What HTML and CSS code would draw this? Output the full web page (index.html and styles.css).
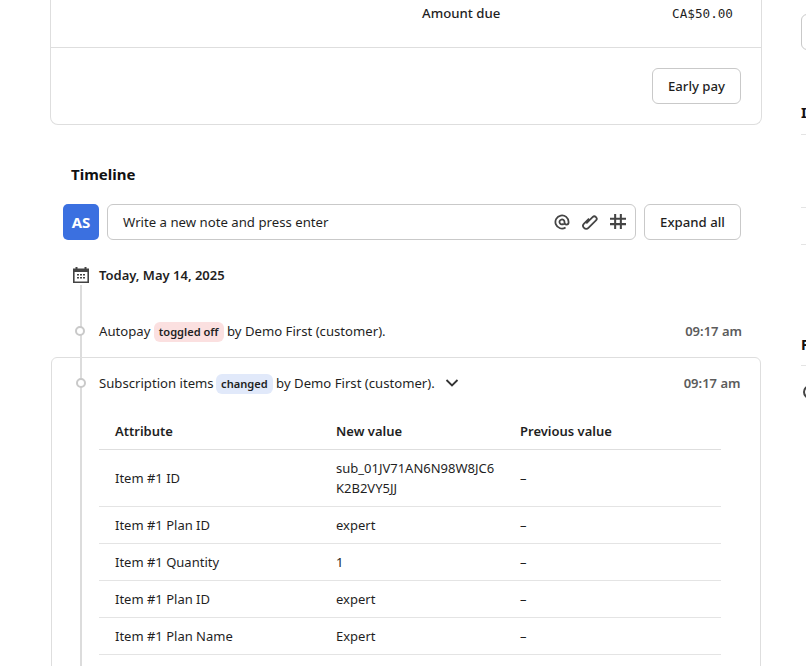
FILE: index.html
```html
<!DOCTYPE html>
<html lang="en">

<head>
    <meta charset="UTF-8">
    <title>Subscription</title>
    <link rel="stylesheet" href="styles.css">
</head>

<body>
    <div class="page">
        <main class="main">
            <section class="card">
                <div class="due-row">
                    <span class="due-label">Amount due</span>
                    <span class="due-value">CA$50.00</span>
                </div>
                <div class="card-foot">
                    <button class="btn btn-pay">Early pay</button>
                </div>
            </section>

            <section class="timeline">
                <h2 class="timeline-title">Timeline</h2>
                <div class="note-row">
                    <div class="avatar">AS</div>
                    <div class="note-input">
                        <span class="note-text">Write a new note and press enter</span>
                        <svg class="note-icon" viewBox="0 0 18 18"><path d="M13 15.2A7.4 7.4 0 1 1 16.4 9v.7a2.3 2.3 0 0 1-4.6 0V9a2.8 2.8 0 1 0-.9 2" /></svg>
                        <svg class="note-icon" viewBox="0 0 18 18"><path d="M5.5 7v8a3.5 3.5 0 0 0 7 0V3a2.7 2.7 0 0 0-5.4 0v10" transform="rotate(45 9 9)" /></svg>
                        <svg class="note-icon note-hash" viewBox="0 0 18 18"><path d="M5.8 0v17M12.2 0v17M0 5.4h18M0 11.4h18" /></svg>
                    </div>
                    <button class="btn btn-expand">Expand all</button>
                </div>

                <div class="events">
                    <div class="rail"></div>
                    <div class="day">
                        <svg class="day-icon" viewBox="0 0 16 16"><path fill="#444" fill-rule="evenodd" d="M0 1.5h2.5V0h2v1.5h7V0h2v1.5H16V16H0zM1.6 5v9.4h12.8V5z" /><path fill="#444" d="M4 7h2v1.6H4zM7 7h2v1.6H7zM10 7h2v1.6h-2zM4 10h2v1.6H4zM7 10h2v1.6H7zM10 10h2v1.6h-2z" /></svg>
                        <span>Today, May 14, 2025</span>
                    </div>

                    <div class="event">
                        <span class="dot"></span>
                        <span class="event-text">Autopay <span class="tag tag-red">toggled off</span> by Demo First (customer).</span>
                        <span class="event-time">09:17 am</span>
                    </div>

                    <div class="detail">
                        <div class="event event-open">
                            <span class="dot"></span>
                            <span class="event-text">Subscription items <span class="tag tag-blue">changed</span> by Demo First (customer).</span>
                            <svg class="chevron" viewBox="0 0 14 8"><path d="M1.5 1 7 6.5 12.5 1" /></svg>
                            <span class="event-time">09:17 am</span>
                        </div>
                        <table class="changes">
                            <thead>
                                <tr><th class="col-a">Attribute</th><th class="col-b">New value</th><th>Previous value</th></tr>
                            </thead>
                            <tbody>
                                <tr class="row-tall"><td>Item #1 ID</td><td class="wrap">sub_01JV71AN6N98W8JC6<br>K2B2VY5JJ</td><td>–</td></tr>
                                <tr><td>Item #1 Plan ID</td><td>expert</td><td>–</td></tr>
                                <tr><td>Item #1 Quantity</td><td>1</td><td>–</td></tr>
                                <tr><td>Item #1 Plan ID</td><td>expert</td><td>–</td></tr>
                                <tr><td>Item #1 Plan Name</td><td>Expert</td><td>–</td></tr>
                            </tbody>
                        </table>
                    </div>
                </div>
            </section>
        </main>

        <aside class="side">
            <div class="side-btn"></div>
            <h3 class="side-title">Invoices</h3>
            <div class="side-row side-row-a"></div>
            <div class="side-row side-row-b"></div>
            <h3 class="side-title side-title-2">Payment</h3>
            <div class="side-method"><span class="side-circle"></span></div>
        </aside>
    </div>
</body>

</html>
```

FILE: styles.css
```css
html, body {
    margin: 0;
    height: 100%;
    overflow: hidden;
    background: #fff;
}

body {
    font-family: "Noto Sans", "Open Sans", sans-serif;
    font-size: 13px;
    color: #1f1f1f;
}

.page {
    display: flex;
    gap: 39px;
    width: 1100px;
    padding-left: 50px;
}

.main {
    width: 712px;
    flex: none;
}

/* top card, its top edge is scrolled away */
.card {
    border: 1px solid #dedede;
    border-top: 0;
    border-radius: 0 0 8px 8px;
}

.due-row {
    display: flex;
    justify-content: space-between;
    height: 48px;
    padding: 4px 28px 0 371px;
    box-sizing: border-box;
    border-bottom: 1px solid #dedede;
}

.due-label {
    font-size: 13.2px;
    font-weight: 500;
    line-height: 19px;
}

.due-value {
    font-family: "DejaVu Sans Mono", "Liberation Mono", monospace;
    font-size: 12.67px;
    line-height: 19px;
}

.card-foot {
    display: flex;
    justify-content: flex-end;
    height: 76px;
    padding: 20px 20px 0 0;
    box-sizing: border-box;
}

.btn {
    height: 36px;
    padding: 0;
    border: 1px solid #c9c9c9;
    border-radius: 6px;
    background: #fff;
    font-family: inherit;
    font-size: 13.2px;
    font-weight: 500;
    color: #1f1f1f;
}

.btn-pay {
    width: 89px;
}

.timeline {
    padding-top: 38px;
}

.timeline-title {
    margin: 0 0 19px 21px;
    font-size: 15px;
    line-height: 22px;
    font-weight: 700;
    color: #111;
}

.note-row {
    display: flex;
    gap: 8px;
    padding: 0 21px 0 13px;
}

.avatar {
    flex: none;
    width: 36px;
    height: 36px;
    border-radius: 5px;
    background: #3b70e0;
    color: #fff;
    font-size: 15px;
    font-weight: 700;
    line-height: 36px;
    text-align: center;
}

.note-input {
    flex: 1;
    display: flex;
    align-items: center;
    gap: 12px;
    height: 36px;
    padding: 0 9px 0 15px;
    box-sizing: border-box;
    border: 1px solid #c9c9c9;
    border-radius: 6px;
}

.note-text {
    flex: 1;
    font-size: 13.2px;
}

.note-icon {
    width: 16px;
    height: 16px;
    fill: none;
    stroke: #444;
    stroke-width: 2;
}

.note-hash {
    stroke-width: 2.3;
}

.btn-expand {
    flex: none;
    width: 97px;
}

.events {
    position: relative;
    padding-top: 27px;
}

.rail {
    position: absolute;
    left: 30px;
    top: 45px;
    width: 2px;
    height: 400px;
    background: #dcdcdc;
}

.day {
    display: flex;
    align-items: center;
    gap: 10px;
    height: 16px;
    padding-left: 23px;
    font-weight: 600;
}

.day-icon {
    width: 16px;
    height: 16px;
}

.event {
    position: relative;
    display: flex;
    align-items: center;
    height: 26px;
    margin-top: 35px;
    padding: 0 20px 0 49px;
}

.event-text {
    padding-top: 1px;
    font-size: 13.15px;
    white-space: nowrap;
}

.event-time {
    margin-left: auto;
    font-weight: 600;
    color: #5c5c5c;
}

.dot {
    position: absolute;
    left: 25px;
    top: 8px;
    width: 10px;
    height: 10px;
    box-sizing: border-box;
    border: 2px solid #c9c9c9;
    border-radius: 50%;
    background: #fff;
}

.tag {
    display: inline-block;
    padding: 0 5px;
    border-radius: 6px;
    font-size: 11.1px;
    font-weight: 600;
    line-height: 20px;
}

.tag-red {
    background: #fbe0e0;
}

.tag-blue {
    background: #e1e9fa;
    margin-left: -1px;
}

.detail {
    position: relative;
    margin: 13px 1px 0 1px;
    height: 400px;
    border: 1px solid #dedede;
    border-radius: 6px;
}

.event-open {
    margin-top: 12px;
    padding: 0 19.5px 0 47px;
}

.event-open .dot {
    left: 24px;
}

.chevron {
    width: 14px;
    height: 8px;
    margin-left: 10px;
    fill: none;
    stroke: #333;
    stroke-width: 1.8;
}

.changes {
    width: 622px;
    margin: 23px 0 0 47px;
    table-layout: fixed;
    border-collapse: collapse;
    font-size: 13px;
}

.changes th {
    height: 24px;
    padding: 0 16px 6px;
    text-align: left;
    font-weight: 600;
    border-bottom: 1px solid #dedede;
}

.col-a {
    width: 189px;
}

.col-b {
    width: 152px;
}

.changes td {
    height: 36px;
    padding: 0 16px;
    border-bottom: 1px solid #e4e4e4;
}

.changes .wrap {
    padding-right: 0;
    line-height: 20px;
    white-space: nowrap;
}

.row-tall td {
    height: 56px;
}

.side {
    width: 240px;
    flex: none;
}

.side-btn {
    height: 36px;
    margin-top: 14px;
    border: 1px solid #c9c9c9;
    border-radius: 6px;
    box-sizing: border-box;
}

.side-title {
    margin: 51px 0 0;
    font-size: 14.5px;
    line-height: 22px;
    font-weight: 700;
    color: #111;
}

.side-title-2 {
    margin-top: 88px;
}

.side-row {
    border-top: 1px solid #e4e4e4;
}

.side-row-a {
    height: 72px;
    margin-top: 11px;
}

.side-row-b {
    height: 36px;
    border-bottom: 1px solid #e4e4e4;
}

.side-method {
    margin-top: 10px;
    padding-top: 19px;
    border-top: 1px solid #e4e4e4;
}

.side-circle {
    display: block;
    width: 14px;
    height: 14px;
    margin-left: 2px;
    box-sizing: border-box;
    border: 2px solid #444;
    border-radius: 50%;
}
```
